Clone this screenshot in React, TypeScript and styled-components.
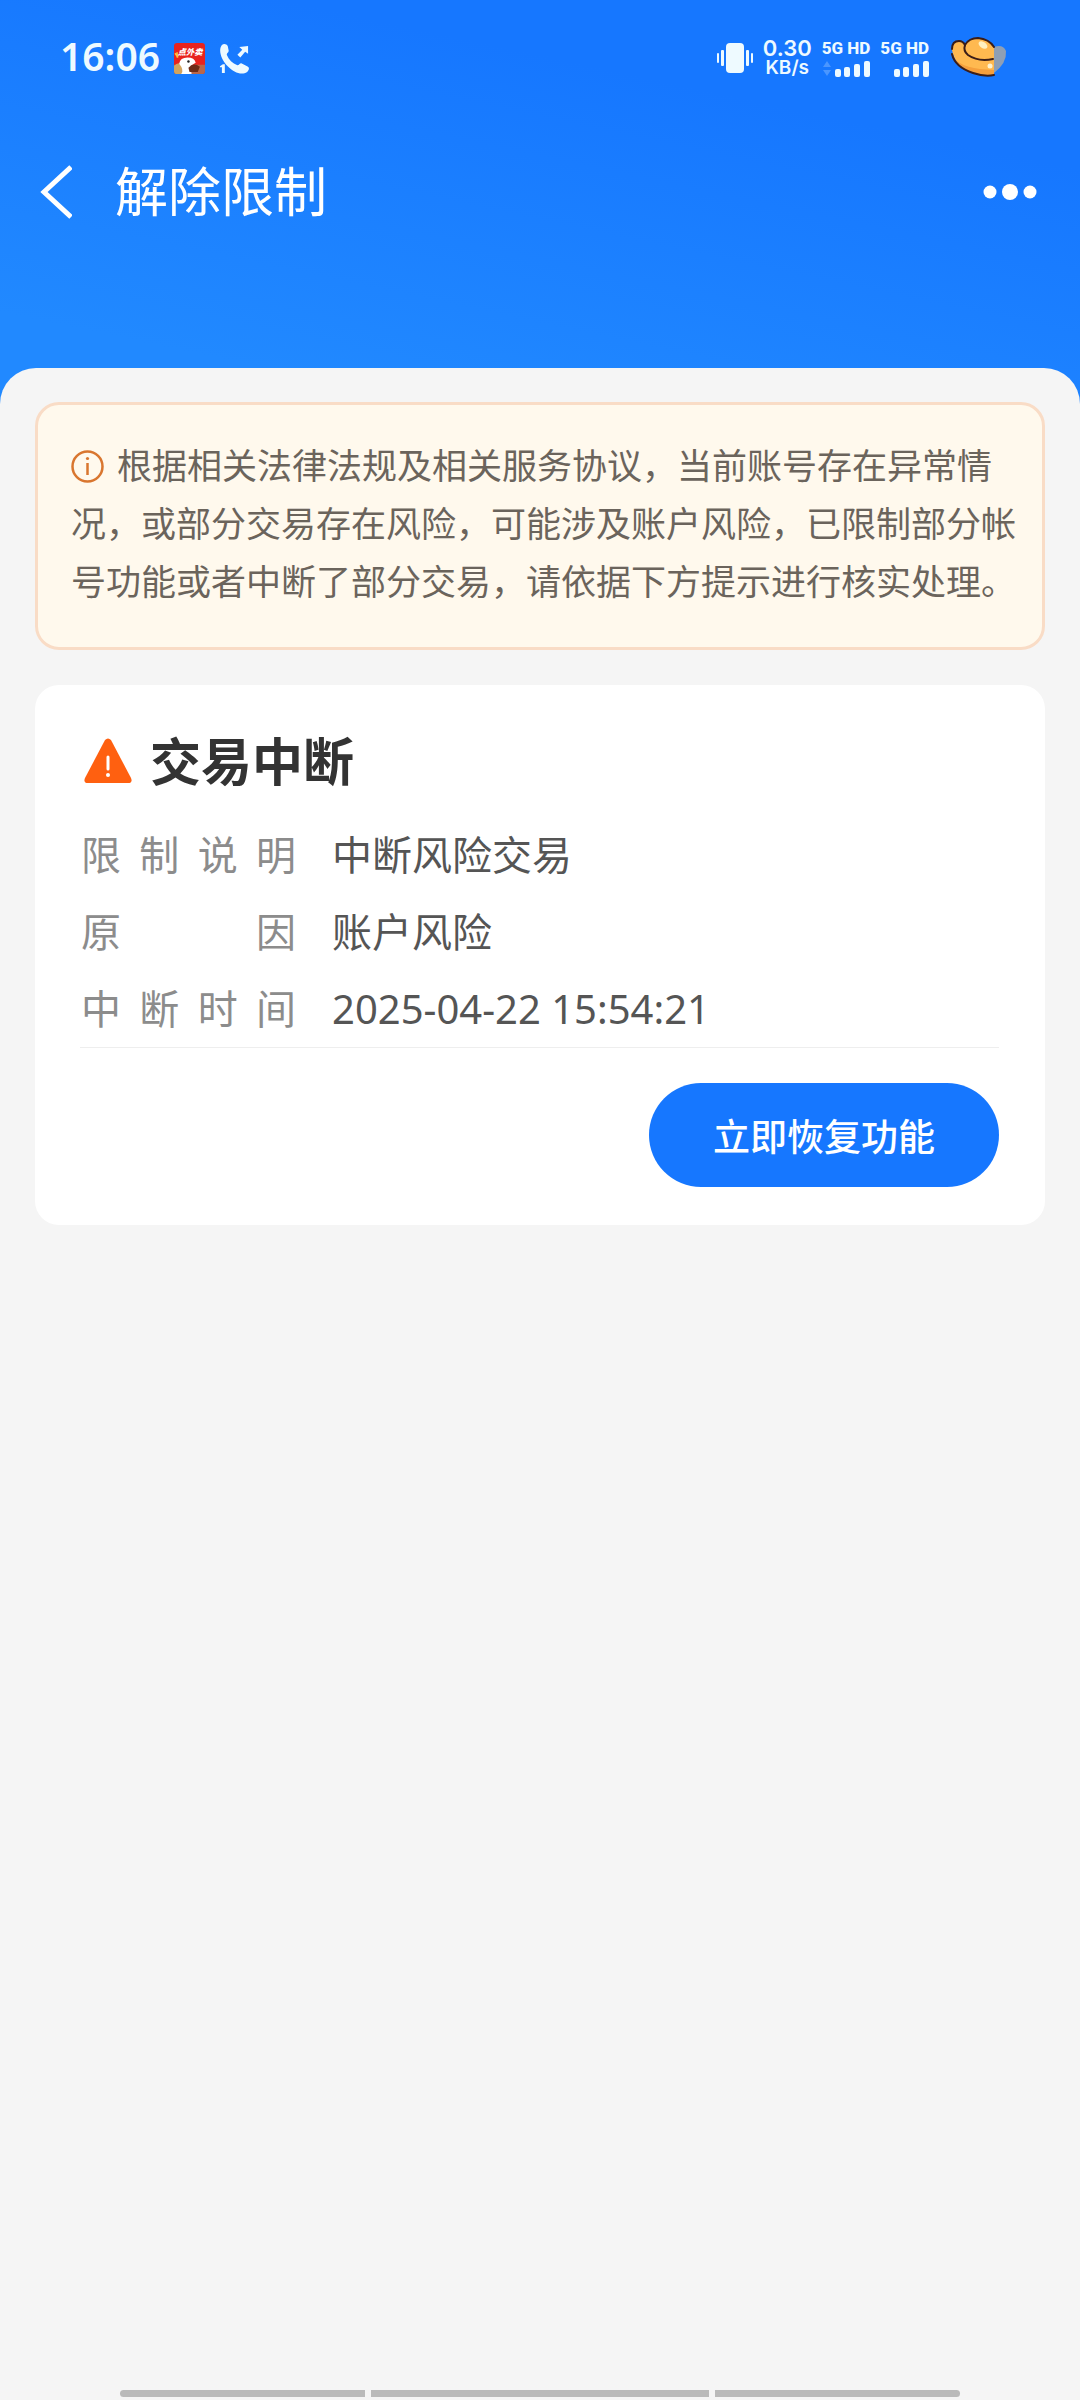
import React from "react";
import styled, { createGlobalStyle } from "styled-components";

const GlobalStyle = createGlobalStyle`
  * { box-sizing: border-box; }
  body {
    margin: 0;
    background: #f5f5f5;
    font-family: "Noto Sans", "Noto Sans CJK SC", sans-serif;
  }
`;

const Page = styled.div`
  min-height: 100vh;
  display: flex;
  flex-direction: column;
  background: #f5f5f5;
`;

const Hero = styled.header`
  color: #fff;
  padding-bottom: 180px;
  background: linear-gradient(192deg, #1677ff 25%, #2189ff 80%);
`;

const StatusBar = styled.div`
  display: flex;
  align-items: center;
  justify-content: space-between;
  height: 116px;
  padding: 0 73px 0 60px;
  color: #eefaff;
`;

const StatusGroup = styled.div<{ $gap: number }>`
  display: flex;
  align-items: center;
  gap: ${(p) => p.$gap}px;
`;

const Clock = styled.time`
  padding-bottom: 4px;
  font-size: 39px;
  line-height: 48px;
  font-weight: 600;
`;

const Speed = styled.div`
  display: flex;
  flex-direction: column;
  align-items: center;
  font-family: Inter, sans-serif;
  font-weight: 600;
  font-size: 19px;
  line-height: 20px;
`;

const SpeedValue = styled.span`
  font-size: 22px;
`;

const Sim = styled.div`
  display: flex;
  flex-direction: column;
  align-items: flex-end;
  gap: 3px;
  font-family: Roboto, sans-serif;
  font-size: 17px;
  line-height: 17px;
  font-weight: 800;
`;

const NavBar = styled.nav`
  display: flex;
  align-items: center;
  height: 152px;
  padding: 0 43px 0 40px;
  gap: 43px;
`;

const IconButton = styled.button`
  display: flex;
  padding: 0;
  border: 0;
  background: none;
  color: inherit;
  cursor: pointer;
`;

const PageTitle = styled.h1`
  flex: 1;
  margin: 0;
  font-size: 53px;
  line-height: 72px;
  font-weight: 400;
`;

const Sheet = styled.main`
  flex: 1;
  display: flex;
  flex-direction: column;
  gap: 35px;
  margin-top: -80px;
  padding: 34px 35px;
  border-radius: 36px 36px 0 0;
  background: #f5f5f5;
`;

const Notice = styled.p`
  margin: 0;
  padding: 32px 24px 36px 33px;
  border: 3px solid #f9dcc6;
  border-radius: 24px;
  background: #fff9ed;
  color: #6b645c;
  font-size: 35px;
  line-height: 58px;
`;

const InfoIcon = styled.svg`
  margin-right: 13px;
  vertical-align: -4px;
`;

const Card = styled.section`
  padding: 40px 46px 38px 45px;
  border-radius: 24px;
  background: #fff;
`;

const CardHeader = styled.div`
  display: flex;
  align-items: center;
  gap: 17px;
  height: 72px;
  padding-left: 3px;
`;

const CardTitle = styled.h2`
  margin: 0;
  color: #333;
  font-size: 51px;
  line-height: 72px;
  font-weight: 700;
`;

const Details = styled.dl`
  display: grid;
  grid-template-columns: 216px 1fr;
  column-gap: 36px;
  margin: 0;
  padding-top: 19px;
  border-bottom: 1px solid #eee;
  font-size: 40px;
  line-height: 77px;
`;

const Term = styled.dt`
  padding-left: 1px;
  color: #8c8c8c;
  text-align-last: justify;
`;

const Value = styled.dd`
  margin: 0;
  color: #555;
`;

const Actions = styled.div`
  display: flex;
  justify-content: flex-end;
  padding-top: 35px;
`;

const PrimaryButton = styled.button`
  height: 104px;
  padding: 0 64px;
  border: 0;
  border-radius: 52px;
  background: #1677ff;
  color: #fff;
  font: 500 37px "Noto Sans CJK SC", sans-serif;
  cursor: pointer;
`;

const GestureBar = styled.footer`
  display: grid;
  grid-template-columns: 245fr 338fr 245fr;
  gap: 6px;
  padding: 0 120px 3px;
`;

const GestureSegment = styled.span`
  height: 7px;
  background: #bababa;
  &:first-child { border-radius: 4px 0 0 4px; }
  &:last-child { border-radius: 0 4px 4px 0; }
`;

const DeliveryIcon = () => (
  <svg width="31" height="31" viewBox="0 0 30 30" aria-hidden="true">
    <rect width="30" height="30" rx="3" fill="#e8231f" />
    <path d="M0 21h30v6q0 3-3 3H3q-3 0-3-3z" fill="#b9674a" />
    <path d="M0 22q5-5 8 0v8H3q-3 0-3-3z" fill="#d2a45f" />
    <path d="M5 20Q6 14 13 14q7 0 8 5l-5 3 1 8H7q3-4-2-10z" fill="#fff" />
    <circle cx="14" cy="18" r="1.200" fill="#222" />
    <path d="M14 24q5-6 11-1l-2 5h-8z" fill="#6d2c18" />
    <path d="M1 10l3 4M3 9v5" stroke="#ffc23c" strokeWidth="1.500" />
    <text x="15.500" y="11.500" textAnchor="middle" fontSize="8" fontWeight="900" fontStyle="italic" fill="#fff" fontFamily="Noto Sans CJK SC, sans-serif">点外卖</text>
  </svg>
);

const CallIcon = () => (
  <svg width="31" height="31" viewBox="0 0 32 32" fill="#eefaff" aria-hidden="true">
    <path d="M3 2c2-2 5-1 6 1l1 5c0 2-2 2-2 4 2 5 6 9 11 11 2 0 2-2 4-2l6 3c3 1 2 4 0 6-6 4-14 0-20-6C2 17-1 7 3 2z" />
    <path d="M30 3v8l-3-2-5 6-3-3 5-5-3-3z" />
    <path d="M4 22h2v9H3v-6H1v-1z" />
  </svg>
);

const VibrateIcon = () => (
  <svg width="36" height="32" viewBox="0 0 36 32" fill="#eefaff" aria-hidden="true">
    <rect x="9" y="1" width="18" height="30" rx="4" />
    <rect x="0" y="11" width="2" height="10" rx="1" />
    <rect x="4" y="8" width="3" height="16" rx="1" />
    <rect x="29" y="8" width="3" height="16" rx="1" />
    <rect x="34" y="11" width="2" height="10" rx="1" />
  </svg>
);

const SignalIcon = ({ traffic = false }: { traffic?: boolean }) => (
  <svg width="48" height="17" viewBox="0 0 48 17" fill="#eefaff" aria-hidden="true">
    {traffic && <path d="M1 7l4-6 4 6zM1 10h8l-4 6z" fill="#4a96ff" />}
    <rect x="13" y="9" width="6" height="8" rx="2" />
    <rect x="22" y="7" width="6" height="10" rx="2" />
    <rect x="32" y="4" width="6" height="13" rx="2" />
    <rect x="42" y="1" width="6" height="16" rx="2" />
  </svg>
);

const IngotIcon = () => (
  <svg width="56" height="42" viewBox="0 0 56 42" aria-hidden="true">
    <path d="M43 10q9-3 12 4 1 12-12 22z" fill="#8f9fb5" />
    <path d="M1 13Q1 4 8 4q4 0 6 4Q18 1 27 1q11 1 16 9v28q-9 2-21-2Q4 30 1 13z" fill="#ffb950" />
    <path d="M4 22q8 10 39 11v5q-9 2-21-2Q8 32 4 22z" fill="#f59f3c" />
    <path d="M43 38q-9 2-21-2Q4 30 1 17M1 12Q1 4 8 4q4 0 6 4Q18 1 27 1q11 1 16 9" fill="none" stroke="#3b1d18" strokeWidth="2" strokeLinecap="round" />
    <path d="M14 8q-2 6 3 10 10 7 25 4" fill="none" stroke="#3b1d18" strokeWidth="2" strokeLinecap="round" />
    <ellipse cx="32" cy="8" rx="5" ry="3" fill="#fff0c0" transform="rotate(35 32 8)" />
    <circle cx="39" cy="29" r="2.500" fill="#fff3cf" />
  </svg>
);

const BackIcon = () => (
  <svg width="32" height="54" viewBox="0 0 32 54" aria-hidden="true">
    <path d="M31 2L4 27l27 25" fill="none" stroke="#fff" strokeWidth="5" />
  </svg>
);

const MoreIcon = () => (
  <svg width="54" height="16" viewBox="0 0 54 16" fill="#fff" aria-hidden="true">
    <circle cx="7" cy="8" r="6.500" />
    <circle cx="27" cy="8" r="8" />
    <circle cx="47" cy="8" r="6.500" />
  </svg>
);

const WarningIcon = () => (
  <svg width="50" height="46" viewBox="0 0 50 46" aria-hidden="true">
    <path d="M22 2q3-3 6 0l20 38q2 5-3 5H5q-5 0-3-5z" fill="#ff6010" />
    <path d="M25 19v12" stroke="#fff" strokeWidth="3" strokeLinecap="round" />
    <circle cx="25" cy="37" r="2" fill="#fff" />
  </svg>
);

const details = [
  { term: "限制说明", value: "中断风险交易" },
  { term: "原因", value: "账户风险" },
  { term: "中断时间", value: "2025-04-22 15:54:21" },
];

export default function App() {
  return (
    <Page>
      <GlobalStyle />
      <Hero>
        <StatusBar>
          <StatusGroup $gap={14}>
            <Clock>16:06</Clock>
            <DeliveryIcon />
            <CallIcon />
          </StatusGroup>
          <StatusGroup $gap={22}>
            <StatusGroup $gap={10}>
              <VibrateIcon />
              <Speed>
                <SpeedValue>0.30</SpeedValue>
                <span>KB/s</span>
              </Speed>
              <Sim>
                <span>5G HD</span>
                <SignalIcon traffic />
              </Sim>
              <Sim>
                <span>5G HD</span>
                <SignalIcon />
              </Sim>
            </StatusGroup>
            <IngotIcon />
          </StatusGroup>
        </StatusBar>
        <NavBar>
          <IconButton type="button" aria-label="返回">
            <BackIcon />
          </IconButton>
          <PageTitle>解除限制</PageTitle>
          <IconButton type="button" aria-label="更多">
            <MoreIcon />
          </IconButton>
        </NavBar>
      </Hero>
      <Sheet>
        <Notice>
          <InfoIcon width="33" height="33" viewBox="0 0 33 33" aria-hidden="true">
            <circle cx="16.500" cy="16.500" r="15" fill="none" stroke="#d9762f" strokeWidth="2.500" />
            <path d="M16.500 13v12" stroke="#d9762f" strokeWidth="2.500" />
            <circle cx="16.500" cy="8.500" r="1.600" fill="#d9762f" />
          </InfoIcon>
          根据相关法律法规及相关服务协议，当前账号存在异常情况，或部分交易存在风险，可能涉及账户风险，已限制部分帐号功能或者中断了部分交易，请依据下方提示进行核实处理。
        </Notice>
        <Card>
          <CardHeader>
            <WarningIcon />
            <CardTitle>交易中断</CardTitle>
          </CardHeader>
          <Details>
            {details.map((d) => (
              <React.Fragment key={d.term}>
                <Term>{d.term}</Term>
                <Value>{d.value}</Value>
              </React.Fragment>
            ))}
          </Details>
          <Actions>
            <PrimaryButton type="button">立即恢复功能</PrimaryButton>
          </Actions>
        </Card>
      </Sheet>
      <GestureBar>
        <GestureSegment />
        <GestureSegment />
        <GestureSegment />
      </GestureBar>
    </Page>
  );
}
